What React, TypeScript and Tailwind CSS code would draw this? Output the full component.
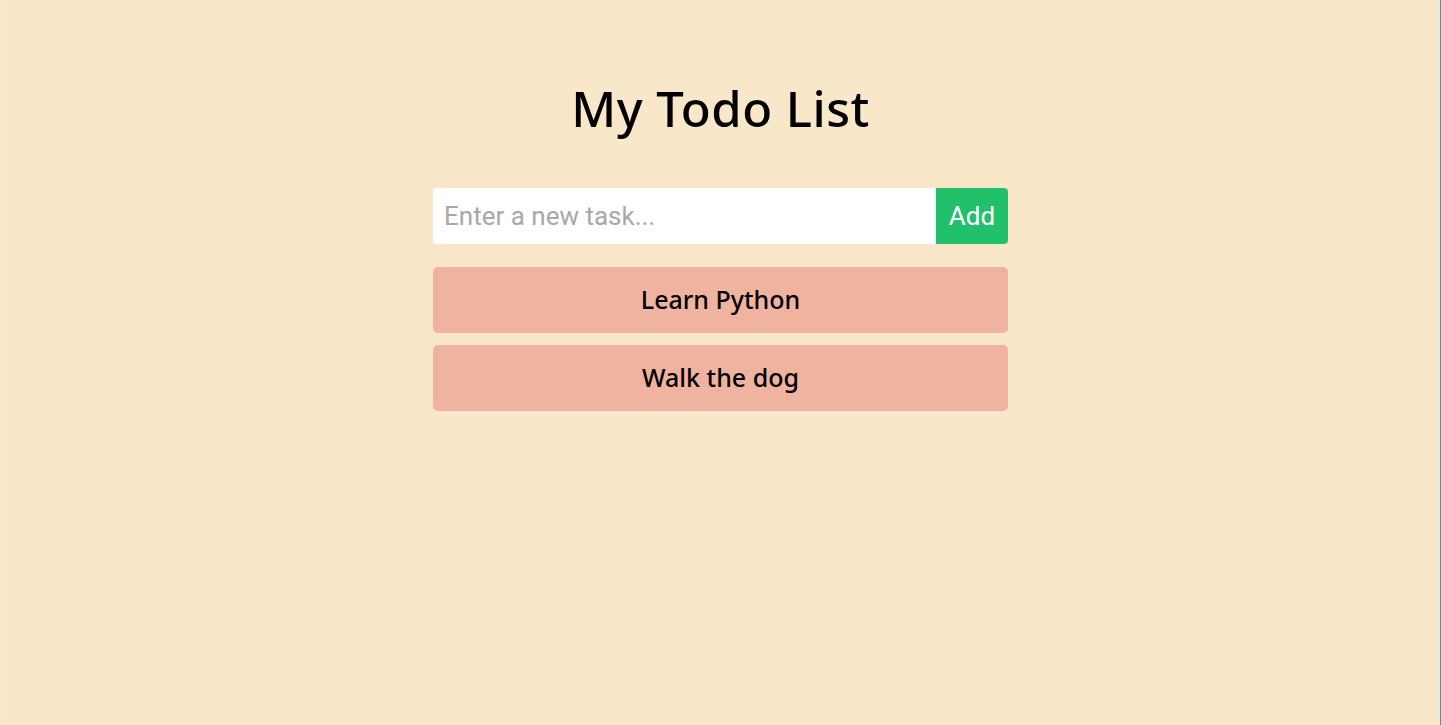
import React, { useState } from 'react';

const rounded = { fontFamily: '"Noto Sans", "Open Sans", sans-serif' };

export default function App() {
  const [tasks, setTasks] = useState<string[]>(['Learn Python', 'Walk the dog']);
  const [draft, setDraft] = useState('');

  const addTask = () => {
    if (!draft.trim()) return;
    setTasks([...tasks, draft.trim()]);
    setDraft('');
  };

  return (
    <div className="min-h-screen w-full bg-[#f8e8c9] flex flex-col items-center border-l border-l-[#faecd3] border-r border-r-[#5a8fb0]">
      <h1 className="mt-[78px] text-[49px] leading-[60px] font-medium text-black tracking-[0.5px] font-['Noto_Sans',sans-serif]">
        My Todo List
      </h1>

      <div className="mt-[50px] w-[575px] flex flex-col">
        <div className="flex h-[56px] rounded-[4px] overflow-hidden bg-white">
          <input
            value={draft}
            onChange={(e) => setDraft(e.target.value)}
            placeholder="Enter a new task..."
            className="flex-1 min-w-0 px-[11px] text-[26px] text-black placeholder:text-[#a8a8a8] outline-none bg-white font-['Roboto',sans-serif]"
          />
          <button
            onClick={addTask}
            className="w-[72px] bg-[#21c06b] text-white text-[26px] font-['Roboto',sans-serif]"
          >
            Add
          </button>
        </div>

        <ul className="mt-[23px] flex flex-col gap-[12px]">
          {tasks.map((t) => (
            <li
              key={t}
              style={rounded}
              className="h-[66px] rounded-[5px] bg-[#f0b3a0] flex items-center justify-center text-[25px] font-medium text-black"
            >
              {t}
            </li>
          ))}
        </ul>
      </div>
    </div>
  );
}
